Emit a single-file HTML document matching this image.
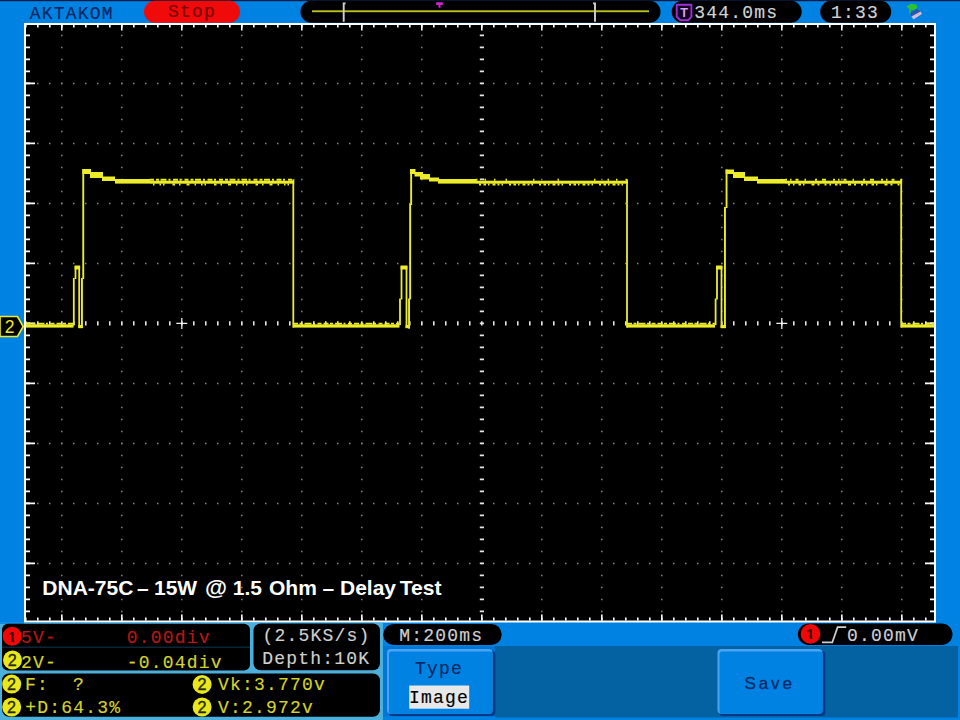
<!DOCTYPE html>
<html><head><meta charset="utf-8"><title>Oscilloscope</title>
<style>html,body{margin:0;padding:0;background:#0082e2;overflow:hidden}svg{display:block}text{white-space:pre}</style>
</head><body>
<svg width="960" height="720" viewBox="0 0 960 720">
<rect width="960" height="720" fill="#0082e2"/>
<rect x="0" y="0" width="960" height="1.2" fill="#041a40"/>
<text x="29.7" y="18.7" font-family="Liberation Mono, monospace" font-size="18" letter-spacing="1.2" stroke-width="0.15" fill="#04265e" stroke="#04265e">AKTAKOM</text>
<rect x="144" y="0.8" width="96" height="21.9" rx="10.9" fill="#f00a0a"/>
<text x="168" y="16.9" font-family="Liberation Mono, monospace" font-size="18" letter-spacing="1.2" stroke-width="0.15" fill="#7a0000" stroke="#7a0000">Stop</text>
<rect x="300.5" y="0.8" width="360" height="22" rx="11" fill="#000"/>
<rect x="312" y="10.3" width="337" height="1.9" fill="#bcc21a"/>
<path d="M345.6,3.4H343.7V21.8" fill="none" stroke="#d0d0d0" stroke-width="1.9"/>
<path d="M593,3.4H595V21.8" fill="none" stroke="#d0d0d0" stroke-width="1.9"/>
<path d="M436.2,2.2h6.6v2.8h-2.3v2.8h-2v-2.8h-2.3z" fill="#d622d6"/>
<rect x="671.7" y="0.8" width="130" height="22" rx="11" fill="#000"/>
<path d="M676.7,4.8H691.4V16.8L688,20.3H680.4L676.7,16.8z" fill="#12001e" stroke="#a030d8" stroke-width="1.9" stroke-linejoin="round"/>
<text x="684.1" y="16.7" font-family="Liberation Sans, sans-serif" font-weight="bold" font-size="12.6" text-anchor="middle" fill="#d8a0f4">T</text>
<text x="694.2" y="18.3" font-family="Liberation Mono, monospace" font-size="18" letter-spacing="1.2" stroke-width="0.15" fill="#d4d4d4" stroke="#d4d4d4">344.0ms</text>
<rect x="820.2" y="0.8" width="71" height="22" rx="11" fill="#000"/>
<text x="831.1" y="18" font-family="Liberation Mono, monospace" font-size="18" letter-spacing="1.2" stroke-width="0.15" fill="#d4d4d4" stroke="#d4d4d4">1:33</text>
<g><path d="M906.4,6.6L911,3.8L916.4,4.4L917.2,8L913.2,10.2L911.2,9.6L910.7,14.2L909.2,14.2L909.4,9.2z" fill="#2cc42c"/><path d="M909.8,13.2L917.5,8.4L922,14L913.6,19.4z" fill="#2858a8"/><path d="M911.4,16.6L920.6,11.4L922,14L913.6,19.4z" fill="#d2bcd8"/></g>
<rect x="25" y="24" width="910" height="597.5" fill="#000"/>
<line x1="25" x2="934" y1="83.4" y2="83.4" stroke="#858585" stroke-width="1.5" stroke-dasharray="1.5 10.5"/>
<line x1="25" x2="934" y1="143.4" y2="143.4" stroke="#858585" stroke-width="1.5" stroke-dasharray="1.5 10.5"/>
<line x1="25" x2="934" y1="203.4" y2="203.4" stroke="#858585" stroke-width="1.5" stroke-dasharray="1.5 10.5"/>
<line x1="25" x2="934" y1="263.4" y2="263.4" stroke="#858585" stroke-width="1.5" stroke-dasharray="1.5 10.5"/>
<line x1="25" x2="934" y1="383.4" y2="383.4" stroke="#858585" stroke-width="1.5" stroke-dasharray="1.5 10.5"/>
<line x1="25" x2="934" y1="443.4" y2="443.4" stroke="#858585" stroke-width="1.5" stroke-dasharray="1.5 10.5"/>
<line x1="25" x2="934" y1="503.4" y2="503.4" stroke="#858585" stroke-width="1.5" stroke-dasharray="1.5 10.5"/>
<line x1="25" x2="934" y1="563.4" y2="563.4" stroke="#858585" stroke-width="1.5" stroke-dasharray="1.5 10.5"/>
<line x1="61.8" x2="61.8" y1="34.65" y2="620" stroke="#858585" stroke-width="1.5" stroke-dasharray="1.5 10.5"/>
<line x1="121.8" x2="121.8" y1="34.65" y2="620" stroke="#858585" stroke-width="1.5" stroke-dasharray="1.5 10.5"/>
<line x1="181.8" x2="181.8" y1="34.65" y2="620" stroke="#858585" stroke-width="1.5" stroke-dasharray="1.5 10.5"/>
<line x1="241.8" x2="241.8" y1="34.65" y2="620" stroke="#858585" stroke-width="1.5" stroke-dasharray="1.5 10.5"/>
<line x1="301.8" x2="301.8" y1="34.65" y2="620" stroke="#858585" stroke-width="1.5" stroke-dasharray="1.5 10.5"/>
<line x1="361.8" x2="361.8" y1="34.65" y2="620" stroke="#858585" stroke-width="1.5" stroke-dasharray="1.5 10.5"/>
<line x1="421.8" x2="421.8" y1="34.65" y2="620" stroke="#858585" stroke-width="1.5" stroke-dasharray="1.5 10.5"/>
<line x1="541.8" x2="541.8" y1="34.65" y2="620" stroke="#858585" stroke-width="1.5" stroke-dasharray="1.5 10.5"/>
<line x1="601.8" x2="601.8" y1="34.65" y2="620" stroke="#858585" stroke-width="1.5" stroke-dasharray="1.5 10.5"/>
<line x1="661.8" x2="661.8" y1="34.65" y2="620" stroke="#858585" stroke-width="1.5" stroke-dasharray="1.5 10.5"/>
<line x1="721.8" x2="721.8" y1="34.65" y2="620" stroke="#858585" stroke-width="1.5" stroke-dasharray="1.5 10.5"/>
<line x1="781.8" x2="781.8" y1="34.65" y2="620" stroke="#858585" stroke-width="1.5" stroke-dasharray="1.5 10.5"/>
<line x1="841.8" x2="841.8" y1="34.65" y2="620" stroke="#858585" stroke-width="1.5" stroke-dasharray="1.5 10.5"/>
<line x1="901.8" x2="901.8" y1="34.65" y2="620" stroke="#858585" stroke-width="1.5" stroke-dasharray="1.5 10.5"/>
<line x1="25" x2="934" y1="323.4" y2="323.4" stroke="#e4e4e4" stroke-width="4.4" stroke-dasharray="1.6 10.4"/>
<line x1="481.9" x2="481.9" y1="34.6" y2="620" stroke="#e4e4e4" stroke-width="4.2" stroke-dasharray="1.6 10.4"/>
<rect x="25" y="24" width="910" height="597.5" fill="none" stroke="#fff" stroke-width="2"/>
<line x1="28" x2="28" y1="34.6" y2="620" stroke="#fff" stroke-width="4" stroke-dasharray="1.6 10.4"/>
<line x1="932" x2="932" y1="34.6" y2="620" stroke="#fff" stroke-width="4" stroke-dasharray="1.6 10.4"/>
<line x1="30.5" x2="30.5" y1="82.6" y2="621" stroke="#fff" stroke-width="9" stroke-dasharray="1.6 58.4"/>
<line x1="929.5" x2="929.5" y1="82.6" y2="621" stroke="#fff" stroke-width="9" stroke-dasharray="1.6 58.4"/>
<line x1="25" x2="934" y1="26" y2="26" stroke="#fff" stroke-width="3" stroke-dasharray="1.6 10.4"/>
<line x1="25" x2="934" y1="619" y2="619" stroke="#fff" stroke-width="3" stroke-dasharray="1.6 10.4"/>
<line x1="61" x2="934" y1="27.5" y2="27.5" stroke="#fff" stroke-width="6" stroke-dasharray="1.6 58.4"/>
<line x1="61" x2="934" y1="617.5" y2="617.5" stroke="#fff" stroke-width="6" stroke-dasharray="1.6 58.4"/>
<path d="M176.3,323.4h11M181.8,317.9v11" stroke="#f0f0f0" stroke-width="1.3" fill="none"/>
<path d="M776.3,323.4h11M781.8,317.9v11" stroke="#f0f0f0" stroke-width="1.3" fill="none"/>
<rect x="26.0" y="324.3" width="47.5" height="3.3" fill="#ecec28"/>
<line x1="26.0" x2="73.5" y1="323.6" y2="323.6" stroke="#ecec28" stroke-width="1.6" stroke-dasharray="5 1.5 3 2 7 1.5 2 2.5 4 2"/>
<rect x="293.0" y="324.3" width="106.5" height="3.3" fill="#ecec28"/>
<line x1="293.0" x2="399.5" y1="323.6" y2="323.6" stroke="#ecec28" stroke-width="1.6" stroke-dasharray="5 1.5 3 2 7 1.5 2 2.5 4 2"/>
<rect x="627.0" y="324.3" width="88.0" height="3.3" fill="#ecec28"/>
<line x1="627.0" x2="715.0" y1="323.6" y2="323.6" stroke="#ecec28" stroke-width="1.6" stroke-dasharray="5 1.5 3 2 7 1.5 2 2.5 4 2"/>
<rect x="901.0" y="324.3" width="33.0" height="3.3" fill="#ecec28"/>
<line x1="901.0" x2="934.0" y1="323.6" y2="323.6" stroke="#ecec28" stroke-width="1.6" stroke-dasharray="5 1.5 3 2 7 1.5 2 2.5 4 2"/>
<rect x="72.9" y="278.0" width="1.8" height="47.0" fill="#ecec28"/>
<rect x="74.6" y="266.0" width="1.8" height="13.0" fill="#ecec28"/>
<rect x="74.6" y="265.5" width="5.5" height="4.0" fill="#ecec28"/>
<rect x="78.3" y="266.0" width="1.8" height="62.0" fill="#ecec28"/>
<rect x="78.3" y="325.0" width="4.4" height="3.2" fill="#ecec28"/>
<rect x="81.0" y="278.0" width="1.9" height="50.0" fill="#ecec28"/>
<rect x="82.3" y="169.0" width="1.9" height="110.0" fill="#ecec28"/>
<rect x="82.3" y="169.0" width="8.7" height="5.0" fill="#ecec28"/>
<rect x="90.0" y="172.0" width="13.0" height="6.0" fill="#ecec28"/>
<rect x="102.0" y="176.5" width="13.0" height="4.5" fill="#ecec28"/>
<rect x="115.0" y="179.0" width="35.0" height="4.6" fill="#ecec28"/>
<rect x="150.0" y="180.7" width="144.2" height="3.0" fill="#ecec28"/>
<line x1="150.0" x2="294.2" y1="179.8" y2="179.8" stroke="#ecec28" stroke-width="1.9" stroke-dasharray="4 2 3 1.5 6 2 2 2.5 5 1.5 2 3"/>
<line x1="153.0" x2="293.3" y1="184.6" y2="184.6" stroke="#ecec28" stroke-width="2" stroke-dasharray="1.5 5 1.5 2 1.5 8 2.5 4 1.5 6 3 5"/>
<rect x="292.4" y="179.3" width="1.8" height="148.3" fill="#ecec28"/>
<rect x="399.1" y="298.5" width="1.8" height="26.5" fill="#ecec28"/>
<rect x="400.6" y="266.0" width="1.8" height="33.5" fill="#ecec28"/>
<rect x="400.6" y="265.5" width="6.8" height="4.0" fill="#ecec28"/>
<rect x="405.6" y="266.0" width="1.8" height="62.0" fill="#ecec28"/>
<rect x="405.6" y="325.0" width="4.3" height="3.2" fill="#ecec28"/>
<rect x="408.1" y="298.5" width="1.9" height="30.1" fill="#ecec28"/>
<rect x="409.2" y="204.0" width="1.9" height="95.5" fill="#ecec28"/>
<rect x="410.2" y="169.0" width="1.9" height="36.0" fill="#ecec28"/>
<rect x="410.0" y="169.0" width="5.5" height="5.0" fill="#ecec28"/>
<rect x="414.5" y="172.0" width="8.5" height="4.5" fill="#ecec28"/>
<rect x="420.0" y="174.0" width="10.0" height="5.5" fill="#ecec28"/>
<rect x="429.0" y="177.5" width="10.0" height="4.0" fill="#ecec28"/>
<rect x="438.0" y="179.0" width="38.0" height="4.6" fill="#ecec28"/>
<rect x="476.0" y="180.7" width="151.9" height="3.0" fill="#ecec28"/>
<line x1="476.0" x2="627.9" y1="179.8" y2="179.8" stroke="#ecec28" stroke-width="1.9" stroke-dasharray="1.5 7 1.5 8 1.5 10 1.5 26 1.5 23 1.5 35 1.5 12"/>
<line x1="479.0" x2="627.0" y1="184.6" y2="184.6" stroke="#ecec28" stroke-width="2" stroke-dasharray="2 2.5 2.5 2 1.5 3 3 2 2 2 1.5 6"/>
<rect x="626.1" y="179.3" width="1.8" height="148.3" fill="#ecec28"/>
<rect x="714.7" y="298.5" width="1.8" height="26.5" fill="#ecec28"/>
<rect x="716.1" y="266.0" width="1.8" height="33.5" fill="#ecec28"/>
<rect x="716.1" y="265.5" width="6.3" height="4.0" fill="#ecec28"/>
<rect x="720.6" y="266.0" width="1.8" height="62.0" fill="#ecec28"/>
<rect x="720.6" y="325.0" width="5.3" height="3.2" fill="#ecec28"/>
<rect x="724.0" y="207.0" width="1.9" height="121.0" fill="#ecec28"/>
<rect x="725.6" y="169.5" width="1.9" height="38.5" fill="#ecec28"/>
<rect x="725.6" y="169.5" width="8.4" height="4.5" fill="#ecec28"/>
<rect x="733.0" y="172.0" width="12.0" height="6.0" fill="#ecec28"/>
<rect x="744.0" y="176.5" width="14.0" height="4.5" fill="#ecec28"/>
<rect x="757.0" y="179.0" width="28.0" height="4.6" fill="#ecec28"/>
<rect x="785.0" y="180.7" width="117.1" height="3.0" fill="#ecec28"/>
<line x1="785.0" x2="902.1" y1="179.8" y2="179.8" stroke="#ecec28" stroke-width="1.9" stroke-dasharray="2 3 1.5 4 3 6 1.5 9 2 5 4 7"/>
<line x1="788.0" x2="901.2" y1="184.6" y2="184.6" stroke="#ecec28" stroke-width="2" stroke-dasharray="2 3 1.5 4 2.5 2 1.5 7 3 3 2 5"/>
<rect x="900.3" y="179.3" width="1.8" height="148.3" fill="#ecec28"/>
<path d="M0,316.5H17.5L23.2,326.5L17.5,336.5H0z" fill="#000" stroke="#ecec28" stroke-width="1.6"/>
<text x="9.5" y="332.7" font-family="Liberation Sans, sans-serif" font-size="17.5" text-anchor="middle" fill="#ecec28">2</text>
<text y="594.8" font-family="Liberation Sans, sans-serif" font-weight="bold" font-size="21" fill="#fff"><tspan x="42.3">DNA-75C</tspan> <tspan x="136.9">–</tspan> <tspan x="154">15W</tspan> <tspan x="205" font-size="22.6">@</tspan> <tspan x="232.8">1.5</tspan> <tspan x="269">Ohm</tspan> <tspan x="322.4">–</tspan> <tspan x="340">Delay</tspan> <tspan x="399.8">Test</tspan></text>
<rect x="0" y="622.6" width="383" height="97.4" fill="#4cb0dc"/>
<rect x="0" y="622.6" width="24" height="1.2" fill="#0082e2"/>
<rect x="2" y="623.8" width="248" height="46.8" rx="6" fill="#000"/>
<rect x="2" y="646.6" width="248" height="1.2" fill="#0c3048"/>
<rect x="2" y="673.4" width="378" height="43.4" rx="7" fill="#000"/>
<rect x="253.5" y="623.5" width="126.5" height="46.8" rx="7" fill="#000"/>
<circle cx="12.2" cy="636.2" r="9.5" fill="#f00808"/>
<clipPath id="c12"><polygon points="5.2,627.2 19.2,627.2 19.2,639.1 14.1,639.1 14.1,642.2 11.2,642.2 11.2,639.1 5.2,639.1"/></clipPath>
<text x="11.9" y="641.5" clip-path="url(#c12)" font-family="Liberation Sans, sans-serif" font-weight="bold" font-size="15" text-anchor="middle" fill="#420000">1</text>
<circle cx="12.5" cy="660.0" r="9.5" fill="#e8e81a"/>
<text x="12.3" y="665.9" font-family="Liberation Sans, sans-serif" font-size="16.2" text-anchor="middle" fill="#262600" stroke="#262600" stroke-width="0.3">2</text>
<circle cx="11.7" cy="684.1" r="9.5" fill="#e8e81a"/>
<text x="11.5" y="690.0" font-family="Liberation Sans, sans-serif" font-size="16.2" text-anchor="middle" fill="#262600" stroke="#262600" stroke-width="0.3">2</text>
<circle cx="11.7" cy="707.0" r="9.5" fill="#e8e81a"/>
<text x="11.5" y="712.9" font-family="Liberation Sans, sans-serif" font-size="16.2" text-anchor="middle" fill="#262600" stroke="#262600" stroke-width="0.3">2</text>
<circle cx="202.1" cy="684.4" r="9.5" fill="#e8e81a"/>
<text x="201.9" y="690.3" font-family="Liberation Sans, sans-serif" font-size="16.2" text-anchor="middle" fill="#262600" stroke="#262600" stroke-width="0.3">2</text>
<circle cx="202.1" cy="707.0" r="9.5" fill="#e8e81a"/>
<text x="201.9" y="712.9" font-family="Liberation Sans, sans-serif" font-size="16.2" text-anchor="middle" fill="#262600" stroke="#262600" stroke-width="0.3">2</text>
<text x="21.1" y="643.4" font-family="Liberation Mono, monospace" font-size="18" letter-spacing="1.2" stroke-width="0.15" fill="#bc1616" stroke="#bc1616">5V-</text>
<text x="126.8" y="643.4" font-family="Liberation Mono, monospace" font-size="18" letter-spacing="1.2" stroke-width="0.15" fill="#bc1616" stroke="#bc1616">0.00div</text>
<text x="21.1" y="667.6" font-family="Liberation Mono, monospace" font-size="18" letter-spacing="1.2" stroke-width="0.15" fill="#d4d42c" stroke="#d4d42c">2V-</text>
<text x="126.8" y="667.6" font-family="Liberation Mono, monospace" font-size="18" letter-spacing="1.2" stroke-width="0.15" fill="#d4d42c" stroke="#d4d42c">-0.04div</text>
<text x="25.1" y="690" font-family="Liberation Mono, monospace" font-size="18" letter-spacing="1.2" stroke-width="0.15" fill="#d4d42c" stroke="#d4d42c">F:  ?</text>
<text x="25.2" y="712.6" font-family="Liberation Mono, monospace" font-size="18" letter-spacing="1.2" stroke-width="0.15" fill="#d4d42c" stroke="#d4d42c">+D:64.3%</text>
<text x="217.9" y="689.8" font-family="Liberation Mono, monospace" font-size="18" letter-spacing="1.2" stroke-width="0.15" fill="#d4d42c" stroke="#d4d42c">Vk:3.770v</text>
<text x="217.9" y="712.7" font-family="Liberation Mono, monospace" font-size="18" letter-spacing="1.2" stroke-width="0.15" fill="#d4d42c" stroke="#d4d42c">V:2.972v</text>
<text x="262.4" y="640.8" font-family="Liberation Mono, monospace" font-size="18" letter-spacing="1.2" stroke-width="0.15" fill="#d0d0d0" stroke="#d0d0d0">(2.5KS/s)</text>
<text x="262.3" y="664.2" font-family="Liberation Mono, monospace" font-size="18" letter-spacing="1.2" stroke-width="0.15" fill="#d0d0d0" stroke="#d0d0d0">Depth:10K</text>
<rect x="383.3" y="624" width="118.4" height="21" rx="10.5" fill="#000"/>
<text x="399.3" y="640.8" font-family="Liberation Mono, monospace" font-size="18" letter-spacing="1.2" stroke-width="0.15" fill="#d0d0d0" stroke="#d0d0d0">M:200ms</text>
<rect x="797.8" y="623.5" width="154.7" height="21.5" rx="10.75" fill="#000"/>
<circle cx="810.5" cy="633.9" r="9.8" fill="#f00808"/>
<clipPath id="c810"><polygon points="803.5,624.9 817.5,624.9 817.5,636.8 812.4,636.8 812.4,639.9 809.5,639.9 809.5,636.8 803.5,636.8"/></clipPath>
<text x="810.2" y="639.2" clip-path="url(#c810)" font-family="Liberation Sans, sans-serif" font-weight="bold" font-size="15" text-anchor="middle" fill="#420000">1</text>
<path d="M822,642.4H832.3L837.6,627.2H846.2" fill="none" stroke="#d0d0d0" stroke-width="1.7"/>
<text x="846.9" y="641.2" font-family="Liberation Mono, monospace" font-size="18" letter-spacing="1.2" stroke-width="0.15" fill="#d0d0d0" stroke="#d0d0d0">0.00mV</text>
<rect x="495" y="646" width="463" height="71.5" fill="#0462a2"/>
<rect x="383" y="646" width="112" height="71" fill="#0076d6"/>
<rect x="389.0" y="651.0" width="106.3" height="65.0" rx="3.5" fill="#023886"/>
<rect x="387.0" y="649.0" width="105.5" height="64.8" rx="4" fill="#4aa4f4"/>
<rect x="389.0" y="651.4" width="103.5" height="62.4" rx="2.5" fill="#0082e2"/>
<rect x="719.5" y="651.0" width="105.8" height="65.0" rx="3.5" fill="#023886"/>
<rect x="717.5" y="649.0" width="105.0" height="64.8" rx="4" fill="#4aa4f4"/>
<rect x="719.5" y="651.4" width="103.0" height="62.4" rx="2.5" fill="#0082e2"/>
<text x="414.9" y="673.8" font-family="Liberation Mono, monospace" font-size="18" letter-spacing="1.2" stroke-width="0.15" fill="#04265e" stroke="#04265e">Type</text>
<rect x="409.2" y="685.5" width="60" height="23.2" fill="#e8e8e8"/>
<text x="409.1" y="703.3" font-family="Liberation Mono, monospace" font-size="18" letter-spacing="1.2" stroke-width="0.15" fill="#000" stroke="#000">Image</text>
<text x="744.5" y="688.6" font-family="Liberation Sans, sans-serif" font-size="17" letter-spacing="2.9" fill="#032a66" stroke="#032a66" stroke-width="0.3">Save</text>
</svg></body></html>
